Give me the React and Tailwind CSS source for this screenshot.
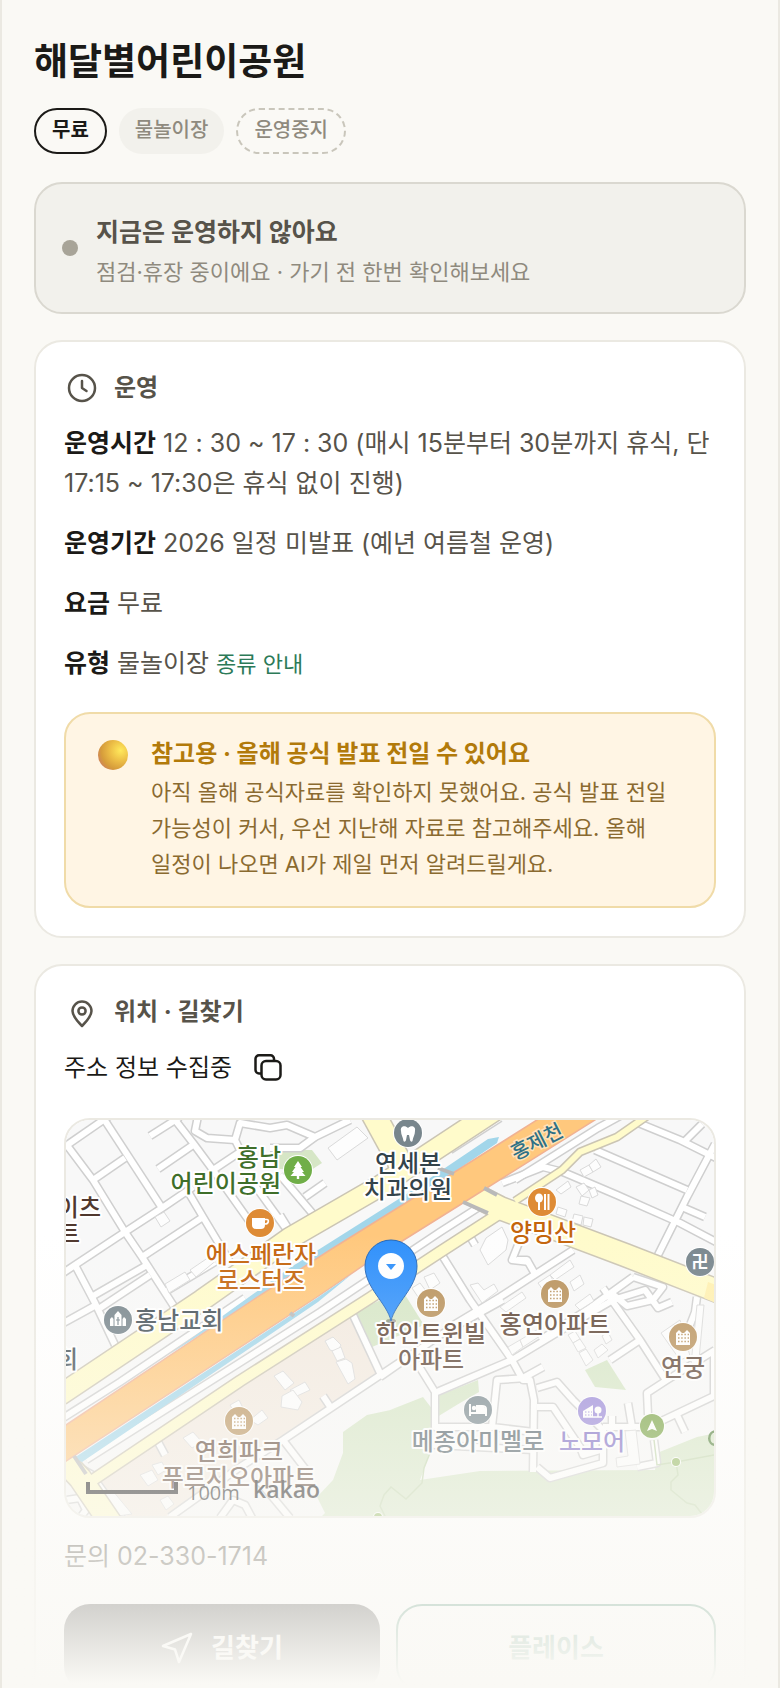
import React from "react";

const STREETS = [
  "M102 1116L162 1208", "M60 1150L112 1114", "M66 1144L93 1180L125 1232L142 1257L175 1308",
  "M93 1180L125 1158", "M193 1187L162 1208L125 1232L75 1265L60 1275",
  "M172 1116L193 1143L213 1170L257 1232", "M150 1136L180 1117", "M158 1169L193 1145",
  "M198 1116L195 1131L207 1138L235 1140L240 1123L270 1128L287 1125L315 1137L350 1120",
  "M315 1137L300 1148L270 1148", "M240 1150L235 1140",
  "M142 1257L203 1217", "M187 1190L203 1217L230 1262", "M75 1265L95 1303L115 1345",
  "M93 1296L147 1265", "M100 1308L150 1275", "M213 1170L240 1152", "M245 1172L290 1234",
  "M60 1325L98 1304", "M165 1292L215 1262", "M280 1175L318 1220", "M305 1197L325 1183",
  "M280 1215L293 1236", "M60 1420L120 1382L245 1298",
  "M636 1122L680 1140L720 1160", "M595 1150L687 1190", "M563 1172L617 1195L680 1223L720 1244",
  "M715 1144L687 1197L658 1255", "M702 1124L683 1143", "M682 1207L705 1217",
  "M502 1183L543 1167L563 1172", "M517 1260L527 1260L535 1274", "M445 1330L500 1297L573 1250",
  "M540 1340L590 1308L633 1277", "M633 1277L663 1287L653 1300L627 1306L610 1292",
  "M697 1297L695 1312L683 1343", "M440 1252L470 1300L512 1360L523 1380L530 1380L534 1400L533 1472",
  "M380 1377L440 1335L503 1300", "M437 1392L512 1360L570 1325L613 1300L645 1290L658 1308L672 1302",
  "M417 1363L435 1392L435 1427L492 1427", "M523 1378L543 1367", "M527 1378L497 1380L492 1427L534 1432",
  "M603 1288L640 1340L667 1382", "M610 1360L640 1340", "M715 1350L667 1380L647 1393L648 1415",
  "M655 1424L714 1396L714 1350", "M677 1415L685 1432", "M537 1388L557 1382L573 1400L603 1430L603 1463L550 1478L537 1467",
  "M537 1407L553 1407L580 1447L583 1455L600 1450", "M603 1427L647 1427", "M628 1403L632 1427",
  "M612 1416L612 1427", "M654 1440L657 1463L637 1467", "M353 1315L380 1373",
  "M400 1362L283 1440L240 1467L170 1517", "M283 1440L310 1475", "M323 1396L331 1408",
  "M158 1442L165 1455", "M220 1518L233 1500L245 1505L252 1518", "M260 1482L290 1518",
  "M66 1500L80 1498L86 1510L80 1518", "M98 1484L122 1518", "M435 1440L435 1445L534 1450",
  "M465 1228L475 1245", "M520 1240L512 1260L530 1262", "M86 1460L320 1312L440 1232L490 1200",
  "M80 1468L98 1478", "M515 1180L598 1128L620 1116", "M450 1150L500 1118",
];

const BUILDINGS = [
  "155,1217 164,1212 170,1221 161,1227", "328,1148 357,1127 368,1138 337,1160",
  "165,1284 185,1272 190,1280 169,1293", "190,1270 215,1253 218,1259 196,1277",
  "480,1250 486,1238 502,1227 508,1240 506,1250 488,1265", "470,1285 478,1283 484,1290 494,1284 498,1291 482,1303",
  "580,1170 589,1165 593,1172 584,1177", "589,1165 596,1159 601,1167 593,1172",
  "556,1190 568,1181 571,1187 561,1194", "576,1187 584,1183 589,1190 582,1196", "589,1190 595,1187 598,1195 592,1198",
  "581,1196 590,1198 587,1206 579,1204", "558,1207 567,1210 565,1217 556,1214", "574,1214 583,1216 581,1225 572,1222",
  "584,1217 593,1219 591,1227 583,1225", "538,1283 550,1275 554,1282 543,1290", "550,1275 570,1260 574,1267 555,1280",
  "570,1282 580,1275 584,1284 574,1291", "575,1305 590,1294 594,1301 580,1310", "500,1307 522,1292 526,1298 506,1312",
  "508,1347 520,1340 523,1347 512,1355", "520,1340 540,1328 543,1334 523,1347", "568,1335 575,1331 580,1339 573,1343",
  "573,1343 580,1339 586,1348 578,1352", "579,1353 586,1349 593,1360 586,1366", "594,1350 602,1344 608,1350 598,1358",
  "602,1336 608,1332 612,1340 606,1344", "661,1333 680,1320 690,1356 680,1360", "697,1305 704,1305 698,1370 690,1374",
  "616,1458 628,1456 625,1431 636,1430 640,1464 617,1467",
  "325,1341 333,1337 341,1345 337,1352 330,1350", "332,1351 341,1347 345,1358 337,1361",
  "336,1362 346,1359 352,1363 355,1379 348,1384 342,1373", "274,1376 283,1371 294,1383 285,1390",
  "290,1390 305,1382 310,1390 297,1396", "282,1396 293,1390 302,1402 298,1410 281,1407",
  "183,1438 193,1432 202,1442 192,1448", "250,1420 262,1410 268,1418 258,1425", "230,1405 239,1400 244,1410 234,1412",
  "140,1475 152,1470 158,1480 148,1486", "152,1465 162,1462 166,1470 158,1475", "160,1500 168,1496 174,1504 166,1510",
  "102,1495 112,1490 132,1514 118,1516", "424,1277 434,1273 440,1283 430,1290", "412,1288 420,1283 426,1291 418,1297",
];

function Apartment({ x, y }) {
  return (
    <g transform={`translate(${x} ${y})`}>
      <circle r="15" fill="#fff" />
      <circle r="14" fill="#b9925c" />
      <path d="M-7 8V-4L-4 -7L-1 -4L1 -4L4 -7L7 -4V8Z" fill="#fff" />
      <path d="M-5 -2.500H6M-5 1H6M-5 4.500H6" stroke="#b9925c" strokeWidth="1.500" strokeDasharray="1.500 1.700" />
    </g>
  );
}

function Marker({ x, y, color, r = 14, children }) {
  return (
    <g transform={`translate(${x} ${y})`}>
      <circle r={r + 1} fill="#fff" />
      <circle r={r} fill={color} />
      {children}
    </g>
  );
}

function Label({ x, y, color, lines, anchor = "middle" }) {
  return (
    <text x={x} y={y} fill={color} textAnchor={anchor} stroke="#fff" strokeWidth="4" strokeLinejoin="round" paintOrder="stroke">
      {lines.map((line, i) => (
        <tspan key={line} x={x} dy={i ? 26 : 0}>{line}</tspan>
      ))}
    </text>
  );
}

function ParkMap() {
  return (
    <svg
      viewBox="66 1120 648 396"
      preserveAspectRatio="xMidYMid slice"
      className="block size-full text-2xl font-medium"
      role="img"
      aria-label="해달별어린이공원 주변 지도"
    >
      <rect x="66" y="1120" width="648" height="396" fill="#f8f8f8" />
      <path d="M97 1483L350 1315L378 1373L283 1437L240 1467L165 1517H128Z" fill="#f3eae0" />
      <g fill="#d6e6c6">
        <path d="M400 1408L367 1415L343 1432V1453L333 1480L317 1497L325 1513L320 1518H716V1433L697 1437L657 1453L655 1470L480 1471L420 1480L430 1453L433 1410L423 1397L390 1410Z" />
        <path d="M435 1397L478 1380L479 1392L460 1403L437 1417Z" />
        <path d="M585 1370L607 1360L626 1390L595 1387Z" />
        <path d="M355 1312L402 1290L424 1325L372 1347Z" />
        <path d="M270 1150L312 1150L322 1163L308 1172L272 1168Z" />
      </g>
      <g fill="none" stroke="#cfcfcf" strokeWidth="9" strokeLinejoin="round">
        {STREETS.map((d) => <path key={d} d={d} />)}
      </g>
      <g fill="none" stroke="#fff" strokeWidth="6" strokeLinejoin="round">
        {STREETS.map((d) => <path key={d} d={d} />)}
      </g>
      <g fill="#fdfdfd" stroke="#dadada" strokeWidth="1">
        {BUILDINGS.map((points) => <polygon key={points} points={points} />)}
      </g>
      <g fill="none" strokeLinejoin="round">
        <g stroke="#cbc5b4">
          <path d="M60 1395L202 1300L290 1238L380 1186L500 1107" strokeWidth="23" />
          <path d="M370 1108L405 1172" strokeWidth="26" />
          <path d="M84 1486L240 1381L370 1298L440 1252L505 1210" strokeWidth="13" />
          <path d="M455 1185L500 1208L625 1255L720 1292" strokeWidth="25" />
          <path d="M650 1114L617 1137L580 1152L562 1170L515 1201" strokeWidth="9" />
          <path d="M58 1455L80 1478L112 1525" strokeWidth="25" />
        </g>
        <g stroke="#fffbcb">
          <path d="M60 1395L202 1300L290 1238L380 1186L500 1107" strokeWidth="20" />
          <path d="M370 1108L405 1172" strokeWidth="23" />
          <path d="M84 1486L240 1381L370 1298L440 1252L505 1210" strokeWidth="10" />
          <path d="M455 1185L500 1208L625 1255L720 1292" strokeWidth="22" />
          <path d="M650 1114L617 1137L580 1152L562 1170L515 1201" strokeWidth="6" />
          <path d="M58 1455L80 1478L112 1525" strokeWidth="22" />
        </g>
        <path d="M708 1282L716 1285V1303L704 1298Z" fill="#fff0b0" />
      </g>
      <path d="M488 1139L499 1137L497 1143L409 1203L292 1276L170 1354L235 1307L288 1269L405 1195Z" fill="#a2d6ea" />
      <path d="M60 1429L253 1300L330 1250L412 1199L510 1137L540 1118H598L463 1203L367 1263L317 1297L60 1465Z" fill="#ffc87d" stroke="#f1b292" strokeWidth="1.500" />
      <path d="M74 1458L317 1298L352 1274L318 1302L82 1462Z" fill="#a2d6ea" />
      <path d="M463 1202L488 1213M484 1188L497 1195M438 1168L454 1174M74 1456L86 1474M290 1313L294 1316" stroke="#b9b9b9" strokeWidth="4" />
      <g fill="none" stroke="#c0d5ab" strokeWidth="1.500">
        <path d="M654 1440L657 1465L676 1462L714 1455M676 1462L678 1475L671 1482V1490L687 1503L695 1505L702 1514" />
        <path d="M430 1453L424 1468L422 1483L406 1499L391 1487L384 1495L380 1506L386 1518" />
      </g>

      <Marker x={676} y={1462} r={4} color="#8fb55a" />
      <Marker x={378} y={1517} r={4} color="#8fb55a" />
      <path d="M716 1431C707 1432 707 1445 716 1445" fill="none" stroke="#4e7d36" strokeWidth="2.500" />

      <Label x={281} y={1166} color="#3f6f2a" anchor="end" lines={["홍남", "어린이공원"]} />
      <Label x={101} y={1216} color="#50382e" anchor="end" lines={["이츠"]} />
      <Label x={80} y={1242} color="#50382e" anchor="end" lines={["트"]} />
      <Label x={261} y={1263} color="#c4640c" lines={["에스페란자", "로스터즈"]} />
      <Label x={408} y={1172} color="#33434b" lines={["연세본", "치과의원"]} />
      <Label x={543} y={1241} color="#c4640c" lines={["양밍산"]} />
      <text x="540" y="1148" transform="rotate(-27 540 1148)" textAnchor="middle" fontSize="20" fill="#2f7186" stroke="#ffe2b8" strokeWidth="3" paintOrder="stroke">홍제천</text>
      <Label x={135} y={1329} color="#434f56" anchor="start" lines={["홍남교회"]} />
      <Label x={78} y={1368} color="#434f56" anchor="end" lines={["회"]} />
      <Label x={431} y={1342} color="#5c4334" lines={["한인트윈빌", "아파트"]} />
      <Label x={555} y={1333} color="#5c4334" lines={["홍연아파트"]} />
      <Label x={683} y={1376} color="#5c4334" lines={["연궁"]} />
      <Label x={478} y={1450} color="#4f5e66" lines={["메종아미멜로"]} />
      <Label x={592} y={1450} color="#7a68c4" lines={["노모어"]} />
      <Label x={239} y={1460} color="#5c4334" lines={["연희파크", "푸르지오아파트"]} />

      <Marker x={298} y={1170} color="#70ae48">
        <path d="M0 -9L4 -3H2.500L6 2H4L7.500 6H1.200V9H-1.200V6H-7.500L-4 2H-6L-2.500 -3H-4Z" fill="#fff" />
      </Marker>
      <Marker x={260} y={1223} color="#de8b35">
        <path d="M-8 -5H5V2C5 5 3 6 1 6H-4C-7 6 -8 4 -8 2Z" fill="#fff" />
        <path d="M5 -3.500H7C9 -3.500 9 1 5 1" fill="none" stroke="#fff" strokeWidth="1.700" />
      </Marker>
      <Marker x={408} y={1133} color="#78868d">
        <path d="M0 -5C3 -8 8 -7 7 -2C7 2 5 4 4.500 8C4 9 2.500 9 2 7L1 2H-1L-2 7C-2.500 9 -4 9 -4.500 8C-5 4 -7 2 -7 -2C-8 -7 -3 -8 0 -5Z" fill="#fff" />
      </Marker>
      <Marker x={542} y={1202} color="#de8b35">
        <ellipse cx="-3" cy="-4" rx="4" ry="4.500" fill="#fff" />
        <path d="M-3 0V8M3 -8V8M6.500 -8V8" stroke="#fff" strokeWidth="2" />
      </Marker>
      <Marker x={700} y={1262} color="#78868d">
        <text y="6" textAnchor="middle" fontSize="17" fontWeight="700" fill="#fff">卍</text>
      </Marker>
      <Marker x={118} y={1320} color="#76848b">
        <path d="M-8 6V-1L-6 -3L-4.500 -1V6ZM-3.500 6V-5L0 -9L3.500 -5V6ZM4.500 6V-1L6 -3L8 -1V6Z" fill="#fff" />
        <path d="M0 -3V5M-2 0H2" stroke="#76848b" strokeWidth="1.200" />
      </Marker>
      <Marker x={478} y={1410} color="#75858c">
        <path d="M-8 -6V6M8 6V-1C8 -4 6 -4 4 -4H-1V3M-8 3H8" fill="none" stroke="#fff" strokeWidth="2" />
        <path d="M-1 -4H5L8 -1V3H-1Z" fill="#fff" />
        <circle cx="-4" cy="-2" r="2.200" fill="#fff" />
      </Marker>
      <Marker x={592} y={1411} color="#9684d8">
        <path d="M-9 6V0L1 -6V6Z" fill="#fff" />
        <circle cx="6" cy="-1" r="3.500" fill="#fff" />
        <path d="M6 1V6M-9 6H10" stroke="#fff" strokeWidth="1.500" />
        <path d="M-7 1H0M-7 4H0" stroke="#9684d8" strokeDasharray="1.500 1.500" />
      </Marker>
      <Marker x={652} y={1426} r={12} color="#74a03d">
        <path d="M0 -6L5 5L0 3L-5 5Z" fill="#fff" />
      </Marker>
      <Apartment x={555} y={1294} />
      <Apartment x={431} y={1303} />
      <Apartment x={683} y={1337} />
      <Apartment x={239} y={1421} />

      <ellipse cx="391" cy="1321" rx="5" ry="2" fill="#000" opacity="0.35" />
      <path d="M391 1321C387 1303 365 1288 365 1266A26 26 0 0 1 417 1266C417 1288 395 1303 391 1321Z" fill="#2f90fb" stroke="#2266b8" strokeWidth="1" />
      <circle cx="391" cy="1266" r="13" fill="#fff" />
      <path d="M386 1264H396L391 1270Z" fill="#2f90fb" />

      <path d="M88 1482V1492H176V1482" fill="none" stroke="#141414" strokeWidth="4" />
      <text x="187" y="1500" fontSize="20" fontWeight="400" fill="#1c1c1c" className="font-[Open_Sans,sans-serif]">100m</text>
      <text x="253" y="1498" fontSize="23" fontWeight="600" fill="#141414" className="font-[Open_Sans,sans-serif]">kakao</text>
    </svg>
  );
}

function Row({ label, children }) {
  return (
    <p className="text-[25px] text-[#57534a]">
      <strong className="font-bold text-[#1b1a17]">{label}</strong> {children}
    </p>
  );
}

function CardTitle({ icon, children }) {
  return (
    <div className="flex items-center gap-[14px]">
      {icon}
      <h2 className="font-bold text-[#57534a]">{children}</h2>
    </div>
  );
}

const card = "rounded-[28px] border-2 border-[#ebe9e2] bg-white px-7 pt-[26px] pb-7";

export default function App() {
  return (
    <div className="relative h-screen overflow-hidden border-x-2 border-[#ebe9e2] bg-[#faf9f5] font-[Inter,'Noto_Sans_CJK_KR',sans-serif] text-2xl leading-10 break-keep text-[#1b1a17]">
      <main className="flex flex-col gap-[26px] px-8 pt-8">
        <header>
          <h1 className="text-[37px] leading-[60px] font-bold">해달별어린이공원</h1>
          <div className="mt-4 mb-[2px] flex gap-3 text-xl leading-10">
            <span className="rounded-full border-2 border-[#1b1a17] px-4 pb-[2px] font-bold">무료</span>
            <span className="rounded-full bg-[#f2f1ec] px-4 pt-[2px] font-medium text-[#8f8a7e]">물놀이장</span>
            <span className="rounded-full border-2 border-dashed border-[#c9c6bb] px-4 pb-[2px] font-medium text-[#8f8a7e]">운영중지</span>
          </div>
        </header>

        <section className="flex items-center gap-[18px] rounded-[28px] border-2 border-[#dad8d0] bg-[#f2f1ec] px-[26px] py-5">
          <span className="size-4 shrink-0 rounded-full bg-[#a8a498]" />
          <div className="pt-2">
            <h2 className="text-[25px] font-bold text-[#57534a]">지금은 운영하지 않아요</h2>
            <p className="text-[22px] text-[#8f8a7e]">점검·휴장 중이에요 · 가기 전 한번 확인해보세요</p>
          </div>
        </section>

        <section className={card}>
          <CardTitle
            icon={
              <svg viewBox="0 0 36 36" className="size-9" fill="none" stroke="#57534a" strokeWidth="2.500" strokeLinecap="round" strokeLinejoin="round">
                <circle cx="18" cy="18" r="13" />
                <path d="M18 11V18L22.500 21" />
              </svg>
            }
          >
            운영
          </CardTitle>
          <div className="mt-[15px] flex flex-col gap-5">
            <Row label="운영시간">12 : 30 ~ 17 : 30 (매시 15분부터 30분까지 휴식, 단 17:15 ~ 17:30은 휴식 없이 진행)</Row>
            <Row label="운영기간">2026 일정 미발표 (예년 여름철 운영)</Row>
            <Row label="요금">무료</Row>
            <Row label="유형">
              물놀이장 <a href="#types" className="text-[22px] text-[#2c7a58]">종류 안내</a>
            </Row>
          </div>
          <aside className="mt-7 flex gap-[22px] rounded-[26px] border-2 border-[#f0dba8] bg-[#fff5e4] px-[31px] pt-5 pb-6">
            <svg viewBox="0 0 32 32" className="mt-1 size-8 shrink-0">
              <defs>
                <radialGradient id="ball" cx="0.750" cy="0.350" r="0.800">
                  <stop offset="0" stopColor="#ffe95c" />
                  <stop offset="0.450" stopColor="#ecbd46" />
                  <stop offset="0.800" stopColor="#d69c3b" />
                  <stop offset="1" stopColor="#cf8558" />
                </radialGradient>
              </defs>
              <circle cx="16" cy="17" r="15" fill="url(#ball)" />
            </svg>
            <div>
              <h3 className="font-bold text-[#b27a0a]">참고용 · 올해 공식 발표 전일 수 있어요</h3>
              <p className="text-[22px] leading-9 text-[#8a6a30]">
                아직 올해 공식자료를 확인하지 못했어요. 공식 발표 전일 가능성이 커서, 우선 지난해 자료로 참고해주세요. 올해 일정이 나오면 AI가 제일 먼저 알려드릴게요.
              </p>
            </div>
          </aside>
        </section>

        <section className={card}>
          <CardTitle
            icon={
              <svg viewBox="0 0 36 36" className="size-9" fill="none" stroke="#57534a" strokeWidth="2.500" strokeLinejoin="round">
                <path d="M18 32C12 26 8.500 21.500 8.500 17A9.500 9.500 0 0 1 27.500 17C27.500 21.500 24 26 18 32Z" />
                <circle cx="18" cy="17" r="3.600" />
              </svg>
            }
          >
            위치 · 길찾기
          </CardTitle>
          <div className="mt-4 flex items-center gap-[22px]">
            <span>주소 정보 수집중</span>
            <button type="button" aria-label="주소 복사">
              <svg viewBox="0 0 28 28" className="size-7" fill="none" stroke="#1b1a17" strokeWidth="2.500" strokeLinejoin="round">
                <rect x="7.500" y="7" width="19" height="18.500" rx="4.500" />
                <path d="M7.500 19.500H5A3.500 3.500 0 0 1 1.500 16V4.800A3.500 3.500 0 0 1 5 1.300H16.500A3.500 3.500 0 0 1 20 4.800V7" />
              </svg>
            </button>
          </div>
          <div className="mt-[30px] h-[400px] overflow-hidden rounded-[26px] border-2 border-[#ebe9e2]">
            <ParkMap />
          </div>
          <p className="mt-[18px] text-[25px] text-[#57534a]">문의 02-330-1714</p>
          <div className="mt-7 flex gap-4 text-[26px] font-bold">
            <button type="button" className="flex h-[88px] flex-1 items-center justify-center gap-[18px] rounded-[26px] bg-[#1b1a17] text-white">
              <svg viewBox="0 0 32 32" className="size-8" fill="none" stroke="currentColor" strokeWidth="2.500" strokeLinejoin="round">
                <path d="M30 2L2 14L14 17.500L18 30Z" />
              </svg>
              길찾기
            </button>
            <button type="button" className="h-[88px] flex-1 rounded-[26px] border-2 border-[#2c7a58] text-[#2c7a58]">플레이스</button>
          </div>
        </section>
      </main>
      <div className="pointer-events-none absolute inset-x-0 bottom-0 h-[454px] bg-linear-to-b from-[#faf9f5]/0 to-[#faf9f5] to-99%" />
    </div>
  );
}
